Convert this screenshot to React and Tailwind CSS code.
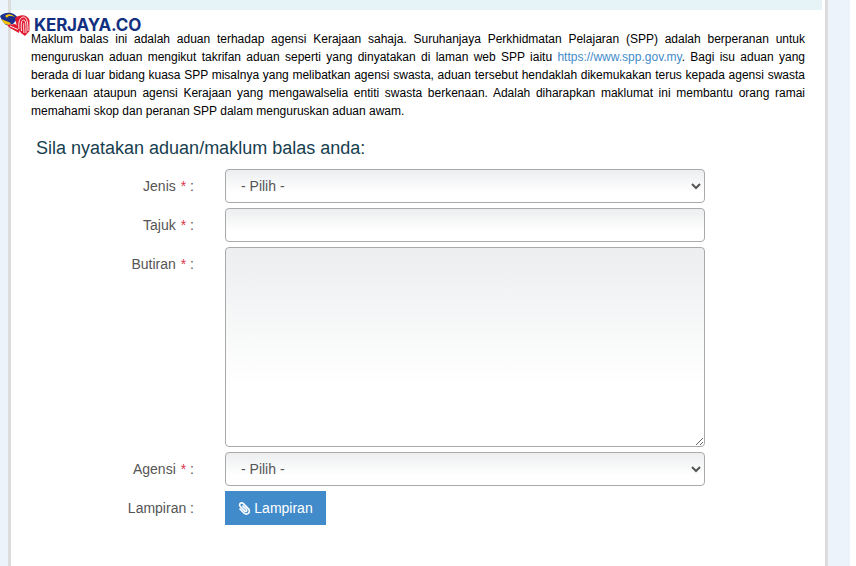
import React from "react";
import { FaPaperclip } from "react-icons/fa";

const Label = ({ children, req = true }) => (
  <div className="w-[194px] shrink-0 text-right text-[14px] leading-[20px] pt-[7px] text-[#555]">
    {children}
    {req && <span className="ml-[5px] text-[#e0334c]">*</span>}
    <span> :</span>
  </div>
);

const controlBase =
  "block w-[480px] rounded-[4px] border border-[#aaa] bg-gradient-to-b from-[#eceeef] to-white to-70% text-[14px] text-[#555] outline-none";

const Sel = () => (
  <select className={`${controlBase} h-[34px] pl-[11px] pr-[8px]`} defaultValue="">
    <option value="">- Pilih -</option>
  </select>
);

const Flag = () => (
  <svg width="31" height="26" viewBox="0 12 31 26" className="block">
    <path d="M0 16 C6 11 14 12 18 18 L13 24 L6 25 C3 22 1 19 0 16 Z" fill="#1c2f8f" />
    <path d="M5 16 C8 13 12 14 15 17 C11 15.5 8 15.5 7 18 Z" fill="#f7c600" />
    <path d="M1 19 L11 23 L9 25 L5 24 Z" fill="#f7c600" />
    <path d="M7 25 L15 24 L20 28 L19 33 L10 28 Z" fill="#e01a30" />
    <path d="M10 26 L18 29.5" stroke="#fff" strokeWidth="0.9" fill="none" />
    <path d="M15 18 C20 14 27 14 29.5 20 L29.5 31 L25 36 L21 33 L17 27 Z" fill="#e01a30" />
    <path d="M19 29 C18 22 20 17 23.5 17 C27 17 28 23 28 31 M21.5 31 C21 25 21 20 23.5 20 C26 20 26 25 26 33 M24 33 C23.5 27 23.5 23 24 23" fill="none" stroke="#fff" strokeWidth="0.9" />
  </svg>
);

export default function App() {
  return (
    <div className="flex h-[566px] w-[856px] overflow-hidden bg-white font-['Liberation_Sans',Arial,sans-serif]">
      <div className="h-full w-[850px] bg-[#ecf3fb] pl-[8px] pr-[22px]">
        <div className="relative h-[566px] w-[820px] border-x-[3px] border-[#dcdcdc] bg-white">
          <div className="mr-[3px] h-[10px] bg-[#e7f4f7]" />
          <div className="absolute left-[20px] top-[10px] flex h-[20px] w-[130px] items-center bg-white pl-[3px] pt-[9px] font-['Inter',sans-serif] text-[17px] font-bold leading-[20px] tracking-[-0.2px] text-[#12307f]">
            KERJAYA.CO
          </div>
          <div className="absolute left-[-11px] top-[12px]">
            <Flag />
          </div>
          <div className="ml-[20px] w-[774px] pt-[20px]">
            <p className="text-justify text-[12px] leading-[18px] text-black">
              Maklum balas ini adalah aduan terhadap agensi Kerajaan sahaja. Suruhanjaya Perkhidmatan Pelajaran (SPP) adalah berperanan untuk menguruskan aduan mengikut takrifan aduan seperti yang dinyatakan di laman web SPP iaitu{" "}
              <a href="#" className="text-[#428bca]">https://www.spp.gov.my</a>. Bagi isu aduan yang berada di luar bidang kuasa SPP misalnya yang melibatkan agensi swasta, aduan tersebut hendaklah dikemukakan terus kepada agensi swasta berkenaan ataupun agensi Kerajaan yang mengawalselia entiti swasta berkenaan. Adalah diharapkan maklumat ini membantu orang ramai memahami skop dan peranan SPP dalam menguruskan aduan awam.
            </p>
          </div>
          <h2 className="ml-[25px] mt-[18px] text-[18px] font-normal leading-[20px] text-[#17404f]">
            Sila nyatakan aduan/maklum balas anda:
          </h2>
          <form className="mt-[11px] flex flex-col gap-[5px]">
            <div className="flex">
              <div className="-ml-[11px] flex"><Label>Jenis</Label></div>
              <div className="ml-[31px]"><Sel /></div>
            </div>
            <div className="flex">
              <div className="-ml-[11px] flex"><Label>Tajuk</Label></div>
              <div className="ml-[31px]"><input className={`${controlBase} h-[34px] px-[12px]`} /></div>
            </div>
            <div className="flex">
              <div className="-ml-[11px] flex"><Label>Butiran</Label></div>
              <div className="ml-[31px]"><textarea className={`${controlBase} h-[200px] px-[12px] py-[6px]`} /></div>
            </div>
            <div className="flex">
              <div className="-ml-[11px] flex"><Label>Agensi</Label></div>
              <div className="ml-[31px]"><Sel /></div>
            </div>
            <div className="flex">
              <div className="-ml-[11px] flex"><Label req={false}>Lampiran</Label></div>
              <div className="ml-[31px]">
                <button type="button" className="flex h-[34px] w-[101px] items-center justify-center gap-[3px] bg-[#428bca] text-[14px] text-white">
                  <FaPaperclip size={13} className="scale-x-[-1]" />
                  Lampiran
                </button>
              </div>
            </div>
          </form>
        </div>
      </div>
    </div>
  );
}
